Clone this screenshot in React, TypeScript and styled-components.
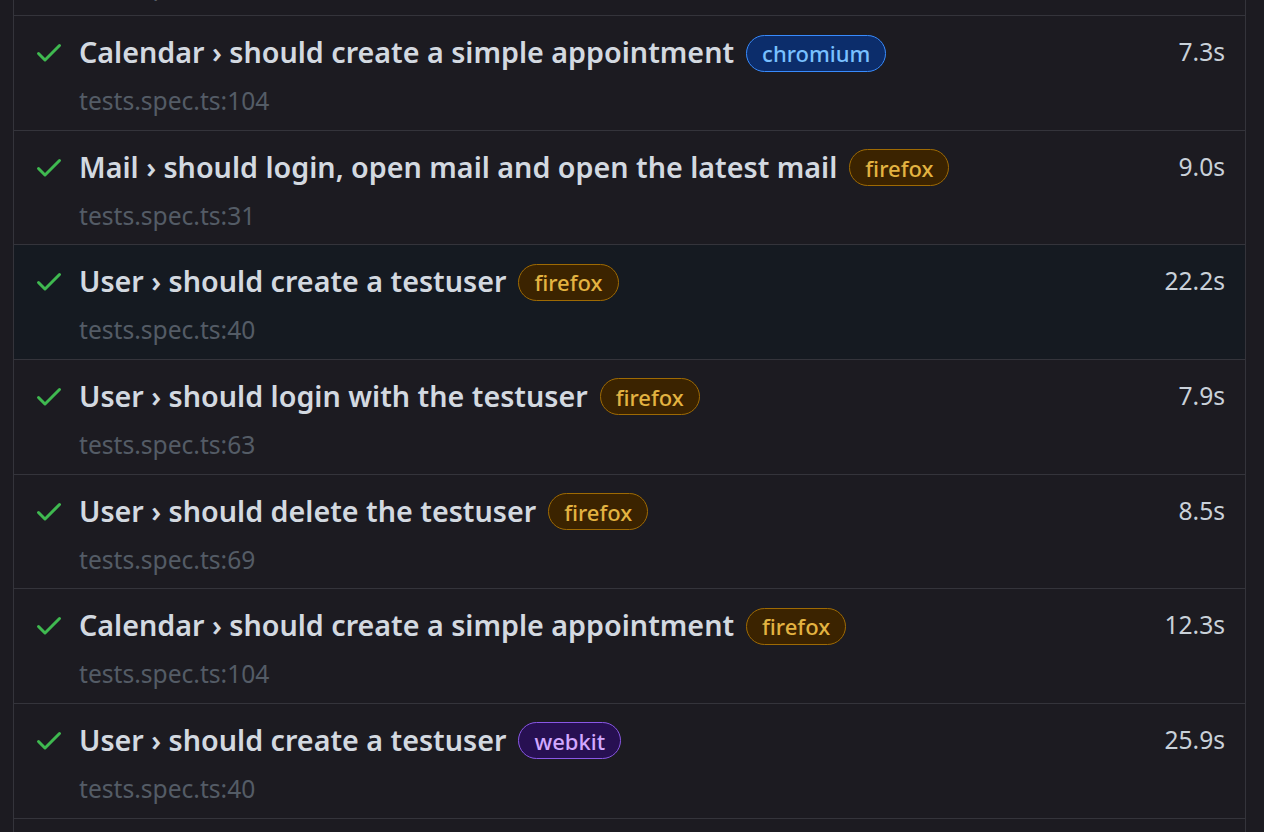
import styled, { createGlobalStyle } from "styled-components";

const GlobalStyle = createGlobalStyle`
  html, body {
    margin: 0;
    padding: 0;
    background: #1c1b21;
    overflow: hidden;
  }
  body {
    font-family: "Noto Sans", "Open Sans", sans-serif;
  }
`;

type Project = "chromium" | "firefox" | "webkit";

const chipColors: Record<Project, { bg: string; border: string; fg: string }> = {
  chromium: { bg: "#0c2d6b", border: "#388bfd", fg: "#79c0ff" },
  firefox: { bg: "#3b2300", border: "#9e6a03", fg: "#e3b341" },
  webkit: { bg: "#271052", border: "#8957e5", fg: "#d2a8ff" },
};

const Page = styled.div`
  padding: 0 18px 0 13px;
  height: 832px;
  overflow: hidden;
`;

// the list is scrolled: the previous row only shows its last pixels
const Panel = styled.div`
  margin-top: -98.67px;
  border-left: 1px solid #34343b;
  border-right: 1px solid #34343b;
`;

const Row = styled.div<{ $active?: boolean }>`
  display: flex;
  align-items: flex-start;
  padding: 18px 20px 11.67px 19px;
  border-bottom: 1px solid #34343b;
  background: ${(p) => (p.$active ? "#151a21" : "transparent")};
`;

const CheckIcon = styled.svg`
  flex: none;
  width: 32px;
  height: 32px;
  margin-top: 2px;
  fill: #3fb950;
`;

const Body = styled.div`
  flex: 1;
  min-width: 0;
  margin-left: 14px;
  display: flex;
  flex-direction: column;
  gap: 12px;
`;

const TitleLine = styled.div`
  display: flex;
  align-items: center;
  height: 38px;
  gap: 12px;
`;

const Title = styled.span`
  padding-bottom: 3px;
  font-size: 28.7px;
  font-weight: 600;
  color: #d3d9e0;
  white-space: nowrap;
`;

const Chip = styled.span<{ $project: Project }>`
  display: inline-flex;
  align-items: center;
  height: 37px;
  box-sizing: border-box;
  padding: 0 15px;
  border-radius: 19px;
  font-size: 22px;
  font-weight: 500;
  background: ${(p) => chipColors[p.$project].bg};
  border: 1px solid ${(p) => chipColors[p.$project].border};
  color: ${(p) => chipColors[p.$project].fg};
`;

const Duration = styled.span`
  margin-left: auto;
  padding-bottom: 3px;
  font-size: 24.6px;
  color: #c9d1d9;
  white-space: nowrap;
`;

const FileLine = styled.div`
  height: 34px;
  line-height: 34px;
  font-size: 24.6px;
  color: #545c66;
`;

const rows: { title: string; project: Project; file: string; time: string; active?: boolean }[] = [
  { title: "User › should delete the testuser", project: "chromium", file: "tests.spec.ts:69", time: "6.1s" },
  { title: "Calendar › should create a simple appointment", project: "chromium", file: "tests.spec.ts:104", time: "7.3s" },
  { title: "Mail › should login, open mail and open the latest mail", project: "firefox", file: "tests.spec.ts:31", time: "9.0s" },
  { title: "User › should create a testuser", project: "firefox", file: "tests.spec.ts:40", time: "22.2s", active: true },
  { title: "User › should login with the testuser", project: "firefox", file: "tests.spec.ts:63", time: "7.9s" },
  { title: "User › should delete the testuser", project: "firefox", file: "tests.spec.ts:69", time: "8.5s" },
  { title: "Calendar › should create a simple appointment", project: "firefox", file: "tests.spec.ts:104", time: "12.3s" },
  { title: "User › should create a testuser", project: "webkit", file: "tests.spec.ts:40", time: "25.9s" },
  { title: "User › should login with the testuser", project: "webkit", file: "tests.spec.ts:63", time: "8.2s" },
];

function Check() {
  return (
    <CheckIcon viewBox='0 0 16 16'>
      <path d='M13.78 4.22a.75.75 0 010 1.06l-7.25 7.25a.75.75 0 01-1.06 0L2.22 9.28a.75.75 0 011.06-1.06L6 10.94l6.72-6.72a.75.75 0 011.06 0z' />
    </CheckIcon>
  );
}

function App() {
  return (
    <>
      <GlobalStyle />
      <Page>
        <Panel>
          {rows.map((r, i) => (
            <Row key={i} $active={r.active}>
              <Check />
              <Body>
                <TitleLine>
                  <Title>{r.title}</Title>
                  <Chip $project={r.project}>{r.project}</Chip>
                  <Duration>{r.time}</Duration>
                </TitleLine>
                <FileLine>{r.file}</FileLine>
              </Body>
            </Row>
          ))}
        </Panel>
      </Page>
    </>
  );
}

export default App;
